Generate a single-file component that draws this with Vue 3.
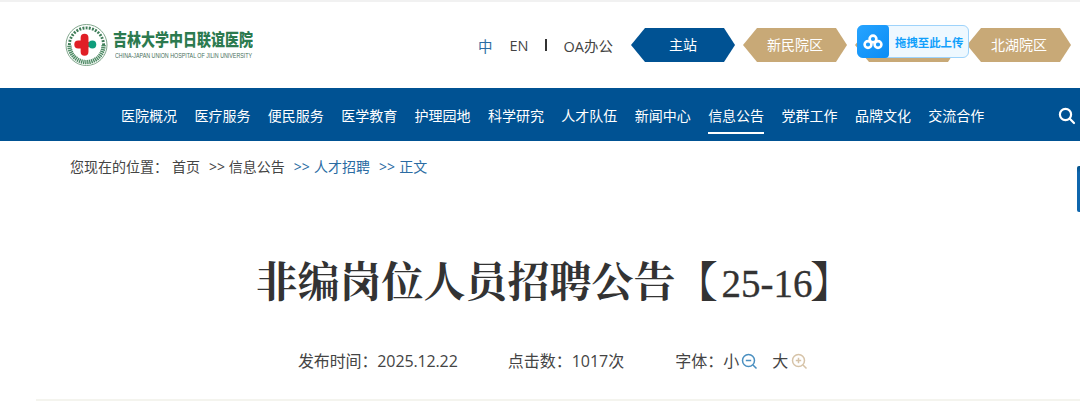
<script setup>
const navItems = ['医院概况', '医疗服务', '便民服务', '医学教育', '护理园地', '科学研究', '人才队伍', '新闻中心', '信息公告', '党群工作', '品牌文化', '交流合作']
const campuses = [
  { name: '主站', active: true },
  { name: '新民院区', active: false },
  { name: '南湖院区', active: false },
  { name: '北湖院区', active: false }
]
</script>

<template>
  <div class="page">
    <header class="top">
      <div class="logo">
        <svg class="badge" width="43" height="44" viewBox="0 0 44 44">
          <circle cx="22" cy="22" r="21" fill="#fff" stroke="#7fa58a" stroke-width="1" />
          <path d="M4.500 22a17.500 17.500 0 0 1 35 0" fill="none" stroke="#3f7d58" stroke-width="3" stroke-dasharray="2 1.300" />
          <path d="M39.500 22a17.500 17.500 0 0 1-35 0" fill="none" stroke="#4d8a64" stroke-width="4.400" stroke-dasharray="1.400 .7" />
          <path d="M20 14.500V29M13.500 21.500H21" fill="none" stroke="#e01f26" stroke-width="8" stroke-linecap="round" />
          <circle cx="28" cy="21.500" r="4" fill="#0f9d7c" />
        </svg>
        <div class="logo-text">
          <div class="logo-cn">吉林大学中日联谊医院</div>
          <div class="logo-en">CHINA-JAPAN UNION HOSPITAL OF JILIN UNIVERSITY</div>
        </div>
      </div>
      <div class="links">
        <span class="lang on">中</span>
        <span class="lang">EN</span>
        <i class="sep"></i>
        <span class="oa">OA办公</span>
      </div>
      <div class="campuses">
        <a v-for="c in campuses" :key="c.name" class="campus" :class="{ active: c.active }">{{ c.name }}</a>
        <div class="upload">
          <span class="upload-icon">
            <svg width="20" height="16" viewBox="0 0 20 16" fill="none" stroke="#fff" stroke-width="2.600">
              <circle cx="10" cy="5" r="3.400" />
              <circle cx="5" cy="10.500" r="3.400" />
              <circle cx="15" cy="10.500" r="3.400" />
            </svg>
          </span>
          <span class="upload-text">拖拽至此上传</span>
        </div>
      </div>
    </header>

    <nav class="nav">
      <ul class="menu">
        <li v-for="item in navItems" :key="item" :class="{ current: item === '信息公告' }">{{ item }}</li>
      </ul>
      <svg class="search" width="18" height="18" viewBox="0 0 18 18" fill="none" stroke="#fff" stroke-width="2.200">
        <circle cx="7.500" cy="7.500" r="5.600" />
        <path d="M11.800 11.800 16 16" stroke-linecap="round" />
      </svg>
    </nav>

    <div class="crumbs">
      <span class="where">您现在的位置：</span>
      <span class="home">首页</span>
      <span>&gt;&gt; 信息公告</span>
      <span class="blue">&gt;&gt; 人才招聘</span>
      <span class="blue">&gt;&gt; 正文</span>
    </div>

    <h1 class="title">非编岗位人员招聘公告【<span class="num">25-16</span>】</h1>

    <div class="meta">
      <span class="date">发布时间：2025.12.22</span>
      <span>点击数：1017次</span>
      <span class="size">
        <span>字体：小</span>
        <svg class="zoom" width="17" height="17" viewBox="0 0 17 17" fill="none" stroke="#4a8fc0" stroke-width="1.500">
          <circle cx="7.500" cy="7.500" r="6" />
          <path d="M4.800 7.500h5.400M12 12l3.500 3.500" />
        </svg>
        <span class="big">大</span>
        <svg class="zoom" width="17" height="17" viewBox="0 0 17 17" fill="none" stroke="#d6c3a8" stroke-width="1.500">
          <circle cx="7.500" cy="7.500" r="6" />
          <path d="M4.800 7.500h5.400M7.500 4.800v5.400M12 12l3.500 3.500" />
        </svg>
      </span>
    </div>
    <div class="rule"></div>
    <div class="edge"></div>
  </div>
</template>

<style>
body {
  background: #fff;
  overflow: hidden;
}
</style>

<style scoped>
.page {
  position: relative;
  width: 1080px;
  height: 402px;
  overflow: hidden;
  border-top: 2px solid #f1f1f1;
  box-sizing: border-box;
  font-family: "Open Sans", "Noto Sans CJK SC", sans-serif;
  color: #444;
}

.top {
  height: 86px;
  display: flex;
  align-items: center;
  padding-left: 65px;
}

.logo {
  flex: none;
  display: flex;
  align-items: center;
  gap: 5px;
  width: 413px;
}

.logo-cn {
  font-family: "Noto Sans CJK SC", sans-serif;
  font-size: 14px;
  font-weight: 900;
  color: #2c7a4f;
  line-height: 20px;
  white-space: nowrap;
  transform: scaleY(1.2);
  transform-origin: center;
}

.logo-en {
  font-family: "Liberation Sans", sans-serif;
  font-size: 8px;
  color: #47705a;
  line-height: 10px;
  margin: 2px 0 0 2px;
  white-space: nowrap;
  transform: scaleX(0.665);
  transform-origin: left center;
}

.links {
  flex: none;
  display: flex;
  align-items: center;
  font-size: 14.500px;
  width: 153px;
}

.lang {
  margin-right: 17px;
}

.lang.on {
  color: #2b6ca3;
}

.sep {
  width: 2px;
  height: 12px;
  background: #333;
  margin-right: 16px;
}

.campuses {
  flex: none;
  position: relative;
  display: flex;
  gap: 8px;
}

.campus {
  width: 104px;
  height: 34px;
  line-height: 34px;
  text-align: center;
  font-size: 14px;
  color: #fff;
  background: #c8a977;
  clip-path: polygon(14px 0, 93px 0, 104px 50%, 93px 100%, 14px 100%, 0 50%);
}

.campus.active {
  background: #005293;
}

.upload {
  position: absolute;
  left: 226px;
  top: -3px;
  width: 112px;
  height: 33px;
  box-sizing: border-box;
  display: flex;
  align-items: center;
  background: #eef8ff;
  border: 1px solid #9ed3fb;
  border-radius: 6px;
}

.upload-icon {
  width: 32px;
  height: 33px;
  margin: -1px 0 -1px -1px;
  flex: none;
  display: flex;
  align-items: center;
  justify-content: center;
  background: linear-gradient(135deg, #27a4ff, #0a8cf5);
  border-radius: 6px 4px 4px 6px;
}

.upload-text {
  margin-left: 6px;
  font-size: 11.400px;
  font-weight: 700;
  color: #12a0fb;
  white-space: nowrap;
}

.nav {
  height: 53px;
  background: #005293;
  display: flex;
  align-items: center;
  padding-left: 121px;
}

.menu {
  flex: none;
  list-style: none;
  margin: 0;
  padding: 0;
  display: flex;
  gap: 17.400px;
  width: 937px;
  color: #fff;
  font-size: 14px;
}

.menu li {
  height: 36px;
  line-height: 35px;
  width: 56px;
  white-space: nowrap;
  margin-top: 3px;
  box-sizing: border-box;
}

.menu li.current {
  border-bottom: 2px solid #fff;
}

.search {
  margin-top: 2px;
}

.crumbs {
  display: flex;
  font-size: 14px;
  padding: 15px 0 0 70px;
  height: 22px;
  line-height: 22px;
  white-space: pre;
}

.where {
  margin-right: 4px;
}

.home {
  margin-right: 9px;
}

.crumbs span + span + span + span {
  margin-left: 9px;
}

.blue {
  color: #2b6ca3;
  word-spacing: 0.600px;
}

.title {
  margin: 80px 0 0;
  text-align: center;
  font-family: "Liberation Serif", "Noto Serif CJK SC", "Noto Sans CJK SC", serif;
  font-size: 42px;
  font-weight: 700;
  line-height: 50px;
  color: #333;
  padding-left: 28px;
}

.num {
  font-size: 39px;
  font-weight: 400;
  margin: 0 -2px 0 4px;
  -webkit-text-stroke: 0.300px #333;
}

.meta {
  display: flex;
  font-size: 16px;
  margin-top: 41px;
  padding-left: 298px;
  gap: 50px;
  line-height: 22px;
}

.date {
  letter-spacing: -0.130px;
}

.size {
  display: flex;
  align-items: center;
  white-space: pre;
  margin-left: 1px;
}

.zoom {
  margin-left: 2px;
}

.big {
  margin: 0 1px 0 14px;
}

.rule {
  position: absolute;
  left: 36px;
  right: 0;
  bottom: 1px;
  height: 2px;
  background: #f4f4ee;
}

.edge {
  position: absolute;
  right: 0;
  top: 164px;
  width: 3px;
  height: 46px;
  background: linear-gradient(#014f85, #0f66ad 15%);
  border-radius: 2px 0 0 2px;
}
</style>
